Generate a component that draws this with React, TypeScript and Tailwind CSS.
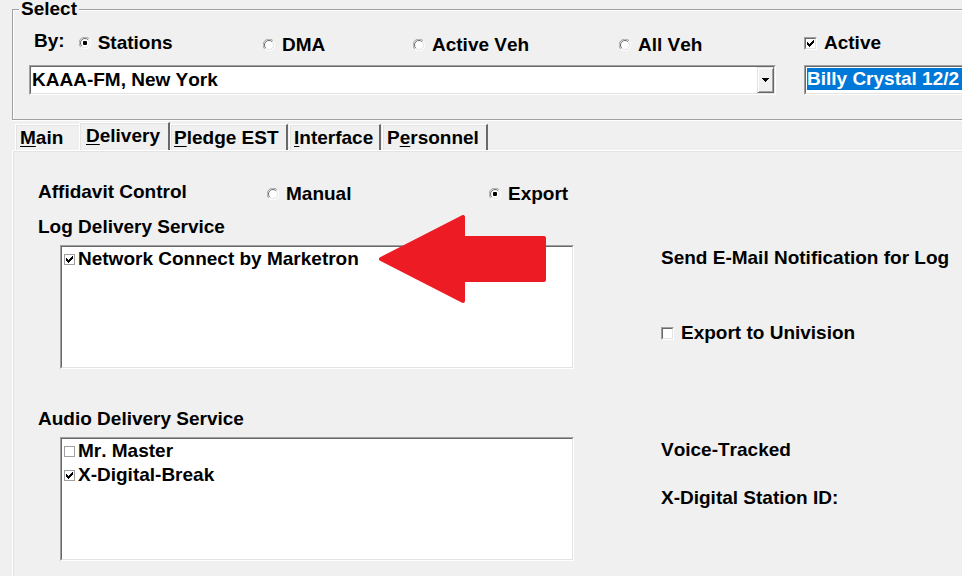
import type { ReactNode } from "react";

const bevel =
  "border border-t-[#a0a0a0] border-l-[#a0a0a0] border-b-white border-r-white";
const bevelInner =
  "border border-t-[#696969] border-l-[#696969] border-b-[#e3e3e3] border-r-[#e3e3e3] bg-white";

function Sunken({ children, className = "" }: { children: ReactNode; className?: string }) {
  return (
    <div className={`${bevel} ${className}`}>
      <div className={`${bevelInner} h-full w-full`}>{children}</div>
    </div>
  );
}

function Tick() {
  return (
    <svg
      viewBox="0 0 7 7"
      shapeRendering="crispEdges"
      className="pointer-events-none col-start-1 row-start-1 hidden size-[7px] place-self-center peer-checked:block"
    >
      <path d="M0 2h1v3h-1zM1 3h1v3h-1zM2 4h1v3h-1zM3 3h1v3h-1zM4 2h1v3h-1zM5 1h1v3h-1zM6 0h1v3h-1z" />
    </svg>
  );
}

function Radio({ name, label, checked }: { name: string; label: string; checked?: boolean }) {
  return (
    <label className="flex items-center gap-[7px] whitespace-nowrap">
      <span className="grid size-3 shrink-0">
        <input
          type="radio"
          name={name}
          defaultChecked={checked}
          className="peer col-start-1 row-start-1 size-3 appearance-none rounded-full outline-none"
        />
        <svg
          viewBox="0 0 12 12"
          className="pointer-events-none col-start-1 row-start-1 size-3"
          fill="none"
        >
          <circle cx="6" cy="6" r="5" fill="#fff" />
          <path d="M1.8 10.2A5.5 5.5 0 0 1 10.2 1.8" stroke="#a0a0a0" />
          <path d="M2.8 9.2A4.5 4.5 0 0 1 9.2 2.8" stroke="#696969" />
          <path d="M10.2 1.8A5.5 5.5 0 0 1 1.8 10.2" stroke="#fff" />
          <path d="M9.2 2.8A4.5 4.5 0 0 1 2.8 9.2" stroke="#e3e3e3" />
        </svg>
        <span className="pointer-events-none col-start-1 row-start-1 hidden size-1 place-self-center rounded-[1px] bg-black peer-checked:block" />
      </span>
      {label}
    </label>
  );
}

function Check({ label, checked }: { label: string; checked?: boolean }) {
  return (
    <label className="flex items-center gap-[7px] whitespace-nowrap">
      <span className="grid size-[13px] shrink-0 border border-t-[#a0a0a0] border-l-[#a0a0a0] border-b-white border-r-white">
        <input
          type="checkbox"
          defaultChecked={checked}
          className="peer col-start-1 row-start-1 size-[11px] appearance-none border border-t-[#696969] border-l-[#696969] border-b-[#e3e3e3] border-r-[#e3e3e3] bg-white outline-none"
        />
        <Tick />
      </span>
      {label}
    </label>
  );
}

function ListCheck({ label, checked }: { label: string; checked?: boolean }) {
  return (
    <label className="flex h-6 items-center gap-[3px] pl-[2px] whitespace-nowrap">
      <span className="grid size-[11px] shrink-0">
        <input
          type="checkbox"
          defaultChecked={checked}
          className="peer col-start-1 row-start-1 size-[11px] appearance-none border border-[#a0a0a0] bg-white outline-none"
        />
        <Tick />
      </span>
      {label}
    </label>
  );
}

function Tab({
  before = "",
  hot,
  after,
  active,
  className,
}: {
  before?: string;
  hot: string;
  after: string;
  active?: boolean;
  className: string;
}) {
  return (
    <button
      type="button"
      role="tab"
      aria-selected={!!active}
      className={`border-t border-l border-t-white border-l-white text-left whitespace-nowrap shadow-[inset_1px_1px_0_#e3e3e3] ${className}`}
    >
      {before}
      <span className="underline decoration-1 underline-offset-2">{hot}</span>
      {after}
    </button>
  );
}

export default function App() {
  return (
    <main className="min-h-screen overflow-hidden bg-[#f0f0f0] pl-3 font-['Liberation_Sans',Arial,sans-serif] text-[19px] leading-6 font-bold text-black [font-kerning:none]">
      <fieldset className="h-[120px] min-w-0 border border-r-0 border-[#a0a0a0] shadow-[inset_1px_1px_0_#fff,0_1px_0_#fff]">
        <legend className="ml-[6px] bg-[#f0f0f0] px-[2px] leading-[18px]">Select</legend>
        <div className="grid grid-cols-[229fr_150fr_206fr_185fr_158fr] pt-[11px] pl-[21px]">
          <div className="flex gap-[14px]">
            <span>By:</span>
            <Radio name="by" label="Stations" checked />
          </div>
          <div className="pt-1">
            <Radio name="by" label="DMA" />
          </div>
          <div className="pt-1">
            <Radio name="by" label="Active Veh" />
          </div>
          <div className="pt-1">
            <Radio name="by" label="All Veh" />
          </div>
          <div className="pt-[2px]">
            <Check label="Active" checked />
          </div>
        </div>
        <div className="grid grid-cols-[747fr_158fr] gap-7 pt-2 pl-4">
          <Sunken className="h-[30px]">
            <div className="flex h-full">
              <select
                aria-label="Station"
                className="min-w-0 flex-1 appearance-none bg-white pb-px pl-px outline-none"
              >
                <option>KAAA-FM, New York</option>
              </select>
              <span className="pointer-events-none flex w-[17px] items-center justify-center border border-t-[#e3e3e3] border-r-[#696969] border-b-[#696969] border-l-[#e3e3e3] bg-[#f0f0f0] shadow-[inset_1px_1px_0_#fff,inset_-1px_-1px_0_#a0a0a0]">
                <svg viewBox="0 0 7 4" className="h-1 w-[7px]" shapeRendering="crispEdges">
                  <path d="M0 0h7v1h-7zM1 1h5v1h-5zM2 2h3v1h-3zM3 3h1v1h-1z" />
                </svg>
              </span>
            </div>
          </Sunken>
          <Sunken className="-mr-1 h-[30px]">
            <div className="px-px pt-px">
              <select
                aria-label="Agreement"
                className="block h-[22px] w-full appearance-none bg-[#0078d7] leading-[22px] text-white outline-none"
              >
                <option>Billy Crystal 12/2</option>
              </select>
            </div>
          </Sunken>
        </div>
      </fieldset>

      <div role="tablist" className="flex items-end pt-[2px] pl-[3px]">
        <Tab hot="M" after="ain" className="h-[26px] w-16 pl-1" />
        <Tab
          hot="D"
          after="elivery"
          active
          className="h-7 w-[91px] border-r-2 border-r-[#696969] pb-[2px] pl-[6px]"
        />
        <Tab
          hot="P"
          after="ledge EST"
          className="h-[26px] w-[118px] border-r-2 border-r-[#696969] pl-[3px]"
        />
        <Tab
          hot="I"
          after="nterface"
          className="ml-px h-[26px] w-[92px] border-r-2 border-r-[#696969] pl-1"
        />
        <Tab
          before="P"
          hot="e"
          after="rsonnel"
          className="ml-px h-[26px] w-[106px] border-r-2 border-r-[#696969] pl-1"
        />
      </div>

      <section
        role="tabpanel"
        aria-label="Delivery"
        className="min-h-[426px] border-t border-l border-white pt-[29px] pl-[25px] shadow-[inset_1px_1px_0_#e3e3e3]"
      >
        <div className="grid grid-cols-[229fr_222fr_473fr]">
          <span>Affidavit Control</span>
          <div className="pt-[2px]">
            <Radio name="affidavit" label="Manual" />
          </div>
          <div className="pt-[2px]">
            <Radio name="affidavit" label="Export" checked />
          </div>
        </div>

        <div className="grid grid-cols-[623fr_301fr] gap-y-[38px] pt-[9px]">
          <div className="min-w-0">
            <h2>Log Delivery Service</h2>
            <div className="relative mt-[6px] mr-[87px] ml-[22px]">
              <Sunken className="h-[124px]">
                <ListCheck label="Network Connect by Marketron" checked />
              </Sunken>
              <svg
                viewBox="0 0 168 88"
                className="pointer-events-none absolute -top-[30px] left-[318px] h-[88px] w-[168px]"
              >
                <path
                  d="M3 44L85 2V23H166V65H85V86Z"
                  fill="#ed1c24"
                  stroke="#ed1c24"
                  strokeWidth="4"
                  strokeLinejoin="round"
                />
              </svg>
            </div>
          </div>
          <div className="flex flex-col gap-[51px] pt-[31px] whitespace-nowrap">
            <span>Send E-Mail Notification for Log</span>
            <Check label="Export to Univision" />
          </div>

          <div className="min-w-0">
            <h2>Audio Delivery Service</h2>
            <Sunken className="mt-[6px] mr-[87px] ml-[22px] h-[124px]">
              <ListCheck label="Mr. Master" />
              <ListCheck label="X-Digital-Break" checked />
            </Sunken>
          </div>
          <div className="flex flex-col gap-6 pt-[31px] whitespace-nowrap">
            <span>Voice-Tracked</span>
            <span>X-Digital Station ID:</span>
          </div>
        </div>
      </section>
    </main>
  );
}
